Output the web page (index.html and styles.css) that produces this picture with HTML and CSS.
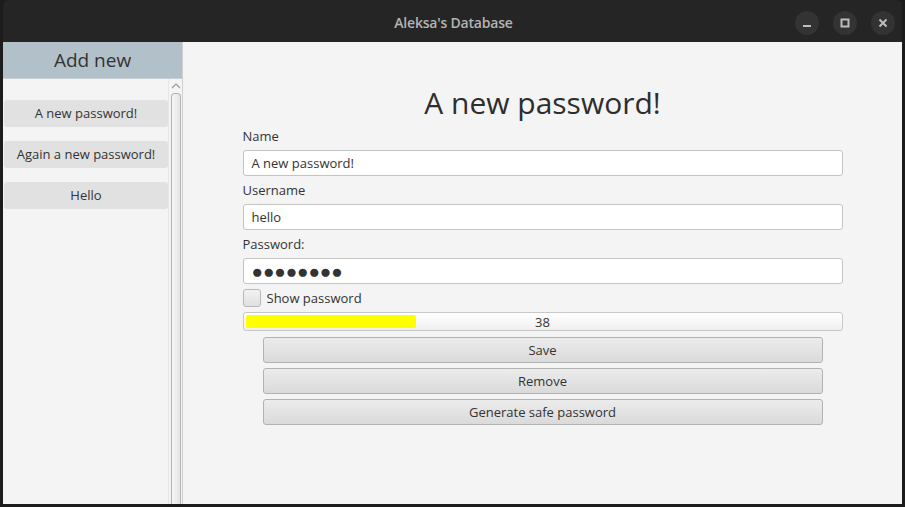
FILE: index.html
```html
<!DOCTYPE html>
<html>
<head>
<meta charset="utf-8">
<link rel="stylesheet" href="styles.css">
</head>
<body>
<div class="window">
  <header class="titlebar">
    <span class="title">Aleksa's Database</span>
    <div class="controls">
      <span class="ctl"><svg width="10" height="10" viewBox="0 0 10 10"><rect x="1" y="7" width="8" height="2" fill="#bdbdbd"/></svg></span>
      <span class="ctl"><svg width="10" height="10" viewBox="0 0 10 10"><rect x="1.5" y="1.5" width="7" height="7" fill="none" stroke="#bdbdbd" stroke-width="2"/></svg></span>
      <span class="ctl"><svg width="10" height="10" viewBox="0 0 10 10"><path d="M1.5 1.5 L8.5 8.5 M8.5 1.5 L1.5 8.5" stroke="#bdbdbd" stroke-width="2"/></svg></span>
    </div>
  </header>
  <div class="content">
    <aside class="sidebar">
      <div class="addnew">Add new</div>
      <div class="listwrap">
        <ul class="list">
          <li class="item">A new password!</li>
          <li class="item">Again a new password!</li>
          <li class="item">Hello</li>
        </ul>
        <div class="scrollbar">
          <svg class="arrow" width="10" height="6" viewBox="0 0 10 6"><path d="M1 5 L5 1 L9 5" fill="none" stroke="#9a9a9a" stroke-width="1.2"/></svg>
          <div class="thumb"></div>
        </div>
      </div>
    </aside>
    <main class="main">
      <h1 class="heading">A new password!</h1>
      <form class="form">
        <label class="lbl">Name</label>
        <div class="input">A new password!</div>
        <label class="lbl">Username</label>
        <div class="input">hello</div>
        <label class="lbl">Password:</label>
        <div class="input dots">●●●●●●●●</div>
        <div class="check-row"><span class="checkbox"></span><span class="check-lbl">Show password</span></div>
        <div class="progress"><div class="fill" style="width:170px"></div><span class="pval">38</span></div>
        <div class="buttons">
          <div class="btn">Save</div>
          <div class="btn">Remove</div>
          <div class="btn">Generate safe password</div>
        </div>
      </form>
    </main>
  </div>
</div>
</body>
</html>
```
FILE: styles.css
```css
* { box-sizing: border-box; }
html, body { margin: 0; padding: 0; }
body {
  background: #1c1c1c;
  width: 905px;
  height: 507px;
  overflow: hidden;
  font-family: "Open Sans", "Noto Sans", sans-serif;
  color: #333;
}
.window {
  margin-left: 3px;
  width: 899px;
  height: 504px;
  display: flex;
  flex-direction: column;
}
.titlebar {
  height: 42px;
  background: #252525;
  display: flex;
  align-items: center;
  justify-content: center;
  position: relative;
  border-radius: 6px 6px 0 0;
  padding-top: 2px;
}
.title {
  color: #b4b4b4;
  font-size: 14px;
  font-weight: 600;
  letter-spacing: -0.2px;
  margin-left: 2px;
}
.controls {
  position: absolute;
  right: 7px;
  top: 11px;
  display: flex;
  gap: 14px;
}
.ctl {
  width: 24px;
  height: 24px;
  border-radius: 50%;
  background: #333;
  display: flex;
  align-items: center;
  justify-content: center;
}
.content {
  flex: 1;
  display: flex;
  background: #f4f4f4;
}
.sidebar {
  width: 180px;
  border-right: 1px solid #cfcfcf;
  display: flex;
  flex-direction: column;
}
.addnew {
  height: 37px;
  background: #b2c1c9;
  font-size: 19px;
  display: flex;
  align-items: center;
  justify-content: center;
  border-bottom: 1px solid #c8d0d4;
}
.listwrap {
  flex: 1;
  display: flex;
}
.list {
  list-style: none;
  margin: 0;
  padding: 21px 0 0 1px;
  flex: 1;
  display: flex;
  flex-direction: column;
  gap: 14px;
}
.item {
  height: 27px;
  background: #e1e1e1;
  border-radius: 3px;
  font-size: 13px;
  display: flex;
  align-items: center;
  justify-content: center;
  padding-bottom: 1px;
}
.scrollbar {
  width: 14px;
  display: flex;
  flex-direction: column;
  align-items: center;
  padding-top: 4px;
  border-left: 1px solid #e6e6e6;
}
.arrow { display: block; margin-bottom: 4px; }
.thumb {
  flex: 1;
  width: 10px;
  border: 1px solid #b4b4b4;
  border-bottom: none;
  border-radius: 4px 4px 0 0;
  background: linear-gradient(to right, #f7f7f7, #e4e4e4);
}
.main {
  flex: 1;
  display: flex;
  flex-direction: column;
  align-items: center;
  padding-top: 40px;
}
.heading {
  margin: 0;
  font-size: 30px;
  font-weight: 400;
  line-height: 42px;
  color: #2e2e2e;
}
.form {
  width: 600px;
  display: flex;
  flex-direction: column;
  margin-top: 3px;
}
.lbl {
  font-size: 13px;
  line-height: 18px;
  margin-bottom: 5px;
}
.input {
  height: 26px;
  background: #fff;
  border: 1px solid #c4c4c4;
  border-radius: 3px;
  font-size: 13px;
  padding: 0 8px;
  display: flex;
  align-items: center;
  margin-bottom: 5px;
}
.dots { font-size: 19px; letter-spacing: -0.1px; padding-left: 8px; }
.check-row {
  display: flex;
  align-items: center;
  gap: 6px;
  height: 18px;
  margin-bottom: 5px;
}
.checkbox {
  width: 18px;
  height: 18px;
  border: 1px solid #b8b8b8;
  border-radius: 3px;
  background: linear-gradient(#f2f2f2, #e0e0e0);
}
.check-lbl { font-size: 13px; }
.progress {
  position: relative;
  height: 19px;
  border: 1px solid #c8c8c8;
  border-radius: 3px;
  background: linear-gradient(#ffffff, #f0f0f0);
  padding: 2px;
  margin-bottom: 6px;
}
.fill {
  height: 100%;
  background: #ffff00;
  border-radius: 2px;
}
.pval {
  position: absolute;
  left: 0; right: 0; top: 0;
  text-align: center;
  font-size: 13px;
  line-height: 18px;
}
.buttons {
  padding: 0 20px;
  display: flex;
  flex-direction: column;
  gap: 5px;
}
.btn {
  height: 26px;
  border: 1px solid #b2b2b2;
  border-radius: 3px;
  background: linear-gradient(#ececec, #dadada);
  font-size: 13px;
  display: flex;
  align-items: center;
  justify-content: center;
  padding-bottom: 1px;
}
```
